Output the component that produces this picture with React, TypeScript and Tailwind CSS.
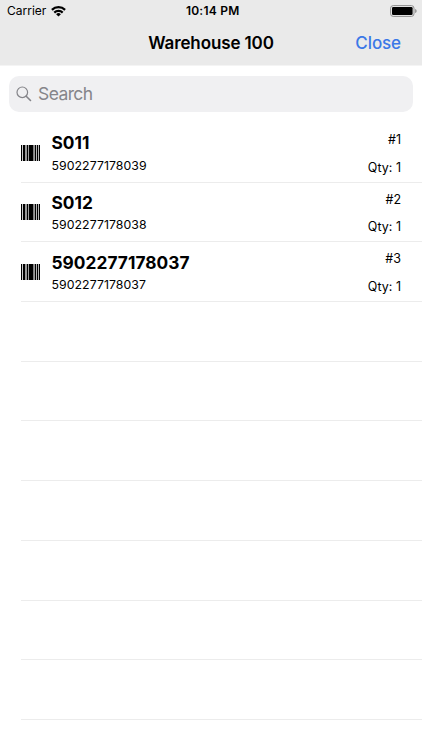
interface Item {
  id: number;
  name: string;
  barcode: string;
  qty: number;
}

const items: Item[] = [
  { id: 1, name: "S011", barcode: "5902277178039", qty: 1 },
  { id: 2, name: "S012", barcode: "5902277178038", qty: 1 },
  { id: 3, name: "5902277178037", barcode: "5902277178037", qty: 1 },
];

const EMPTY_ROWS = 7;

function WifiIcon() {
  return (
    <svg width="15" height="11" viewBox="0 0 15 11" fill="none" stroke="#000" strokeWidth="2.2">
      <path d="M.9 3.9a9.4 9.4 0 0 1 13.2 0" />
      <path d="M3.3 6.6a6 6 0 0 1 8.4 0" />
      <path d="M7.5 10.6 5.1 8.2a3.4 3.4 0 0 1 4.8 0z" fill="#000" stroke="none" />
    </svg>
  );
}

function BatteryIcon() {
  return (
    <svg width="27" height="12" viewBox="0 0 27 12">
      <rect x="0.6" y="0.6" width="23.4" height="10.8" rx="2.6" fill="none" stroke="#8e8e8e" />
      <rect x="2" y="2" width="20.6" height="8" rx="1.2" fill="#000" />
      <path d="M25.1 4v4c1-.3 1.5-1.1 1.5-2s-.5-1.7-1.5-2z" fill="#8e8e8e" />
    </svg>
  );
}

function SearchIcon() {
  return (
    <svg width="16" height="16" viewBox="0 0 16 16" fill="none" stroke="#85858a" strokeLinecap="round">
      <circle cx="6.3" cy="6.3" r="5.3" strokeWidth="1.2" />
      <path d="m10.2 10.2 4.3 4.3" strokeWidth="1.6" />
    </svg>
  );
}

function BarcodeIcon() {
  return (
    <svg width="19" height="16" viewBox="0 0 19 16" fill="#000">
      <rect x="0" width="1" height="16" />
      <rect x="1.8" width="2.2" height="16" />
      <rect x="4.6" width="0.8" height="16" />
      <rect x="6" width="1.3" height="16" />
      <rect x="7.9" width="4.1" height="16" />
      <rect x="12.5" width="0.9" height="16" />
      <rect x="14" width="1.2" height="16" />
      <rect x="15.9" width="1.2" height="16" />
      <rect x="17.8" width="1.2" height="16" />
    </svg>
  );
}

function ItemRow({ item }: { item: Item }) {
  return (
    <li className="ml-[21px] flex h-[59.7px] border-b border-[#ececec] pr-[21px]">
      <div className="w-[30.5px] pt-[21.6px]">
        <BarcodeIcon />
      </div>
      <div className="flex-1 pt-[9.3px]">
        <p className="text-[17.3px] leading-[22px] font-bold tracking-[0.04px]">{item.name}</p>
        <p className="mt-[3.3px] text-[12.3px] leading-4 tracking-[0.06px]">{item.barcode}</p>
      </div>
      <div className="pt-[9px] text-right text-[12.5px] leading-4">
        <p>#{item.id}</p>
        <p className="mt-[11.5px]">Qty: {item.qty}</p>
      </div>
    </li>
  );
}

export default function App() {
  return (
    <div className="h-[750px] overflow-hidden bg-white font-['Inter',sans-serif] text-black">
      <header className="h-[66px] border-b border-[#f4f4f4] bg-[#eaeaea]">
        {/* Status bar */}
        <div className="grid h-[22px] grid-cols-3 items-center pr-[5px] pl-[7px]">
          <div className="flex items-center gap-[5px] text-[12px]">
            <span>Carrier</span>
            <WifiIcon />
          </div>
          <span className="pl-[1.5px] text-center text-[12px] font-semibold tracking-[0.25px]">10:14 PM</span>
          <div className="flex justify-end">
            <BatteryIcon />
          </div>
        </div>
        {/* Navigation bar */}
        <div className="grid h-[43px] grid-cols-[1fr_auto_1fr] items-center px-[21px]">
          <h1 className="col-start-2 text-[17px] font-semibold tracking-[-0.12px]">Warehouse 100</h1>
          <button className="text-right text-[17px] font-medium tracking-[-0.1px] text-[#3b78e7]">Close</button>
        </div>
      </header>

      <div className="mt-[10px] mr-[9px] ml-[8.5px] flex h-[36px] items-center gap-[6.5px] rounded-[10px] bg-[#f0f0f2] pl-[7px] text-[#85858a]">
        <SearchIcon />
        <span className="text-[17.5px] tracking-[-0.6px]">Search</span>
      </div>

      <ul className="mt-[11px]">
        {items.map((item) => (
          <ItemRow key={item.id} item={item} />
        ))}
        {Array.from({ length: EMPTY_ROWS }, (_, i) => (
          <li key={i} className="ml-[21px] h-[59.7px] border-b border-[#ececec]" />
        ))}
      </ul>
    </div>
  );
}
